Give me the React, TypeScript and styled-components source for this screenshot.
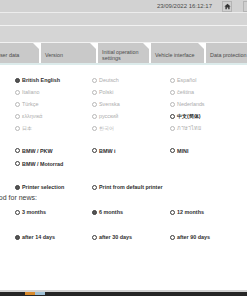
import styled, { createGlobalStyle } from 'styled-components';

const GlobalStyle = createGlobalStyle`
  html, body {
    margin: 0;
    padding: 0;
  }
  body {
    width: 247px;
    height: 296px;
    overflow: hidden;
    background: #fff;
    font-family: "Liberation Sans", Arial, sans-serif;
  }
`;

const Screen = styled.div`
  display: flex;
  flex-direction: column;
  width: 247px;
  height: 296px;
  overflow: hidden;
`;

const TopBar = styled.div`
  height: 12px;
  flex: none;
  display: flex;
  align-items: center;
  justify-content: flex-end;
  background: #d2d2d2;
  border-bottom: 1px solid #ededed;
`;

const DateText = styled.span`
  font-size: 6px;
  color: #4a4a4a;
  margin-right: 10px;
  white-space: nowrap;
`;

const IconButton = styled.div`
  width: 8px;
  height: 9px;
  display: flex;
  align-items: center;
  justify-content: center;
  border: 1px solid #b4b4b4;
  background: #cfcfcf;
  margin-right: 11px;
`;

const EdgeButton = styled.div`
  width: 3px;
  height: 9px;
  border: 1px solid #b4b4b4;
  border-right: none;
  background: #cfcfcf;
`;

const Band = styled.div<{ $h: number }>`
  height: ${(p) => p.$h}px;
  flex: none;
  background: #d5d5d5;
  border-bottom: 1px solid #f2f2f2;
`;

const TabStrip = styled.div`
  height: 20px;
  flex: none;
  display: flex;
  gap: 2px;
  margin-left: -8px;
  background: #fff;
  border-bottom: 2px solid #dcebeb;
`;

const Tab = styled.div<{ $w: number }>`
  width: ${(p) => p.$w}px;
  flex: none;
  display: flex;
  align-items: center;
  padding: 4px 0 0 4px;
  box-sizing: border-box;
  background: #c9c9c9;
  clip-path: polygon(0 0, calc(100% - 6px) 0, 100% 6px, 100% 100%, 0 100%);
  font-size: 5.4px;
  line-height: 6.5px;
  color: #4c4c4c;
`;

const Content = styled.div`
  flex: 1;
  background: #fff;
  overflow: hidden;
`;

const Section = styled.div<{ $top: number; $row: number }>`
  display: grid;
  grid-template-columns: 77px 78px 78px;
  grid-auto-rows: ${(p) => p.$row}px;
  margin-top: ${(p) => p.$top}px;
  padding-left: 15px;
`;

const Option = styled.div<{ $enabled: boolean }>`
  display: flex;
  align-items: center;
  gap: 2px;
  font-size: 5.4px;
  font-weight: ${(p) => (p.$enabled ? 700 : 400)};
  color: ${(p) => (p.$enabled ? '#2e2e2e' : '#acacac')};
  white-space: nowrap;
`;

const Radio = styled.span<{ $checked: boolean; $enabled: boolean }>`
  width: 3px;
  height: 3px;
  flex: none;
  border-radius: 50%;
  border: 1px solid ${(p) => (p.$enabled ? '#3a3a3a' : '#b8b8b8')};
  background: ${(p) => (p.$checked ? '#555' : '#fff')};
`;

const LabelClip = styled.div`
  width: 37px;
  height: 8px;
  display: flex;
  align-items: center;
  justify-content: flex-end;
  overflow: hidden;
`;

const LabelText = styled.span`
  flex: none;
  font-size: 7px;
  color: #3a3a3a;
  white-space: nowrap;
`;

const FooterLine = styled.div`
  height: 2px;
  flex: none;
  background: #d3d3d3;
`;

const Taskbar = styled.div`
  height: 4px;
  flex: none;
  display: flex;
  padding-left: 25px;
  background: #262626;
`;

const TaskIcon = styled.div<{ $color: string }>`
  width: 10px;
  height: 3px;
  background: ${(p) => p.$color};
`;

type Item = { label: string; enabled?: boolean; checked?: boolean };

const languages: Item[] = [
  { label: 'British English', enabled: true, checked: true },
  { label: 'Deutsch' },
  { label: 'Español' },
  { label: 'Italiano' },
  { label: 'Polski' },
  { label: 'čeština' },
  { label: 'Türkçe' },
  { label: 'Svenska' },
  { label: 'Nederlands' },
  { label: 'ελληνικά' },
  { label: 'русский' },
  { label: '中文(简体)', enabled: true },
  { label: '日本' },
  { label: '한국어' },
  { label: 'ภาษาไทย' },
];

const brands: Item[] = [
  { label: 'BMW / PKW', enabled: true },
  { label: 'BMW i', enabled: true },
  { label: 'MINI', enabled: true },
  { label: 'BMW / Motorrad', enabled: true },
];

const printers: Item[] = [
  { label: 'Printer selection', enabled: true, checked: true },
  { label: 'Print from default printer', enabled: true },
];

const months: Item[] = [
  { label: '3 months', enabled: true },
  { label: '6 months', enabled: true, checked: true },
  { label: '12 months', enabled: true },
];

const days: Item[] = [
  { label: 'after 14 days', enabled: true, checked: true },
  { label: 'after 30 days', enabled: true },
  { label: 'after 90 days', enabled: true },
];

const tabs = [
  { label: 'User data', w: 47 },
  { label: 'Version', w: 55 },
  { label: 'Initial operation settings', w: 51 },
  { label: 'Vehicle interface', w: 53 },
  { label: 'Data protection', w: 60 },
];

function Options({ items }: { items: Item[] }) {
  return (
    <>
      {items.map((it) => (
        <Option key={it.label} $enabled={!!it.enabled}>
          <Radio $checked={!!it.checked} $enabled={!!it.enabled} />
          {it.label}
        </Option>
      ))}
    </>
  );
}

function HomeIcon() {
  return (
    <svg width="7" height="7" viewBox="0 0 10 10">
      <path d="M5 1 L9.5 5 H8 V9 H6 V6.5 H4 V9 H2 V5 H0.5 Z" fill="#333" />
    </svg>
  );
}

export default function App() {
  return (
    <>
      <GlobalStyle />
      <Screen>
        <TopBar>
          <DateText>23/09/2022 16:12:17</DateText>
          <IconButton>
            <HomeIcon />
          </IconButton>
          <EdgeButton />
        </TopBar>
        <Band $h={12} />
        <Band $h={16} />
        <TabStrip>
          {tabs.map((t) => (
            <Tab key={t.label} $w={t.w}>
              {t.label}
            </Tab>
          ))}
        </TabStrip>
        <Content>
          <Section $top={9} $row={12}>
            <Options items={languages} />
          </Section>
          <Section $top={10} $row={13}>
            <Options items={brands} />
          </Section>
          <Section $top={11} $row={12}>
            <Options items={printers} />
          </Section>
          <LabelClip>
            <LabelText>Display period for news:</LabelText>
          </LabelClip>
          <Section $top={5} $row={12}>
            <Options items={months} />
          </Section>
          <Section $top={13} $row={12}>
            <Options items={days} />
          </Section>
        </Content>
        <FooterLine />
        <Taskbar>
          <TaskIcon $color="#d98a2c" />
          <TaskIcon $color="#9fc0d6" />
        </Taskbar>
      </Screen>
    </>
  );
}
